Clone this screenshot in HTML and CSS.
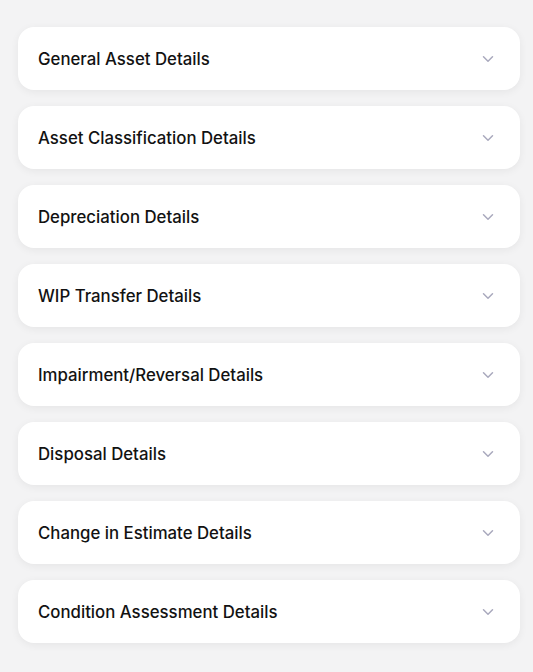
FILE: index.html
```html
<!DOCTYPE html>
<html lang="en">
<head>
  <meta charset="UTF-8" />
  <meta name="viewport" content="width=device-width, initial-scale=1.0"/>
  <title>Asset Details</title>
  <link rel="stylesheet" href="styles.css">
</head>
<body>
  <div class="sections">
    <div class="section"><span class="section-title">General Asset Details</span><svg class="chevron" viewBox="0 0 12 8"><path d="M1.5 1.8 6 6.2l4.5-4.4"/></svg></div>
    <div class="section"><span class="section-title">Asset Classification Details</span><svg class="chevron" viewBox="0 0 12 8"><path d="M1.5 1.8 6 6.2l4.5-4.4"/></svg></div>
    <div class="section"><span class="section-title">Depreciation Details</span><svg class="chevron" viewBox="0 0 12 8"><path d="M1.5 1.8 6 6.2l4.5-4.4"/></svg></div>
    <div class="section"><span class="section-title">WIP Transfer Details</span><svg class="chevron" viewBox="0 0 12 8"><path d="M1.5 1.8 6 6.2l4.5-4.4"/></svg></div>
    <div class="section"><span class="section-title">Impairment/Reversal Details</span><svg class="chevron" viewBox="0 0 12 8"><path d="M1.5 1.8 6 6.2l4.5-4.4"/></svg></div>
    <div class="section"><span class="section-title">Disposal Details</span><svg class="chevron" viewBox="0 0 12 8"><path d="M1.5 1.8 6 6.2l4.5-4.4"/></svg></div>
    <div class="section"><span class="section-title">Change in Estimate Details</span><svg class="chevron" viewBox="0 0 12 8"><path d="M1.5 1.8 6 6.2l4.5-4.4"/></svg></div>
    <div class="section"><span class="section-title">Condition Assessment Details</span><svg class="chevron" viewBox="0 0 12 8"><path d="M1.5 1.8 6 6.2l4.5-4.4"/></svg></div>
  </div>
</body>
</html>
```

FILE: styles.css
```css
body {
  background: #f3f3f4;
  font-family: Inter, "Noto Sans", sans-serif;
  color: #111;
  margin: 0;
  padding: 27px 13px 20px 18px;
}

.sections {
  display: flex;
  flex-direction: column;
  gap: 16px;
}

.section {
  display: flex;
  align-items: center;
  justify-content: space-between;
  height: 63px;
  box-sizing: border-box;
  padding: 1px 26px 0 20px;
  background: #fff;
  border-radius: 16px;
  box-shadow: 0 2px 8px rgba(0, 0, 0, 0.06);
}

.section-title {
  font-size: 16.8px;
  font-weight: 500;
  color: #121212;
}

.chevron {
  width: 12px;
  height: 8px;
  fill: none;
  stroke: #a9a9bd;
  stroke-width: 1.5;
  stroke-linecap: round;
  stroke-linejoin: round;
}
```
